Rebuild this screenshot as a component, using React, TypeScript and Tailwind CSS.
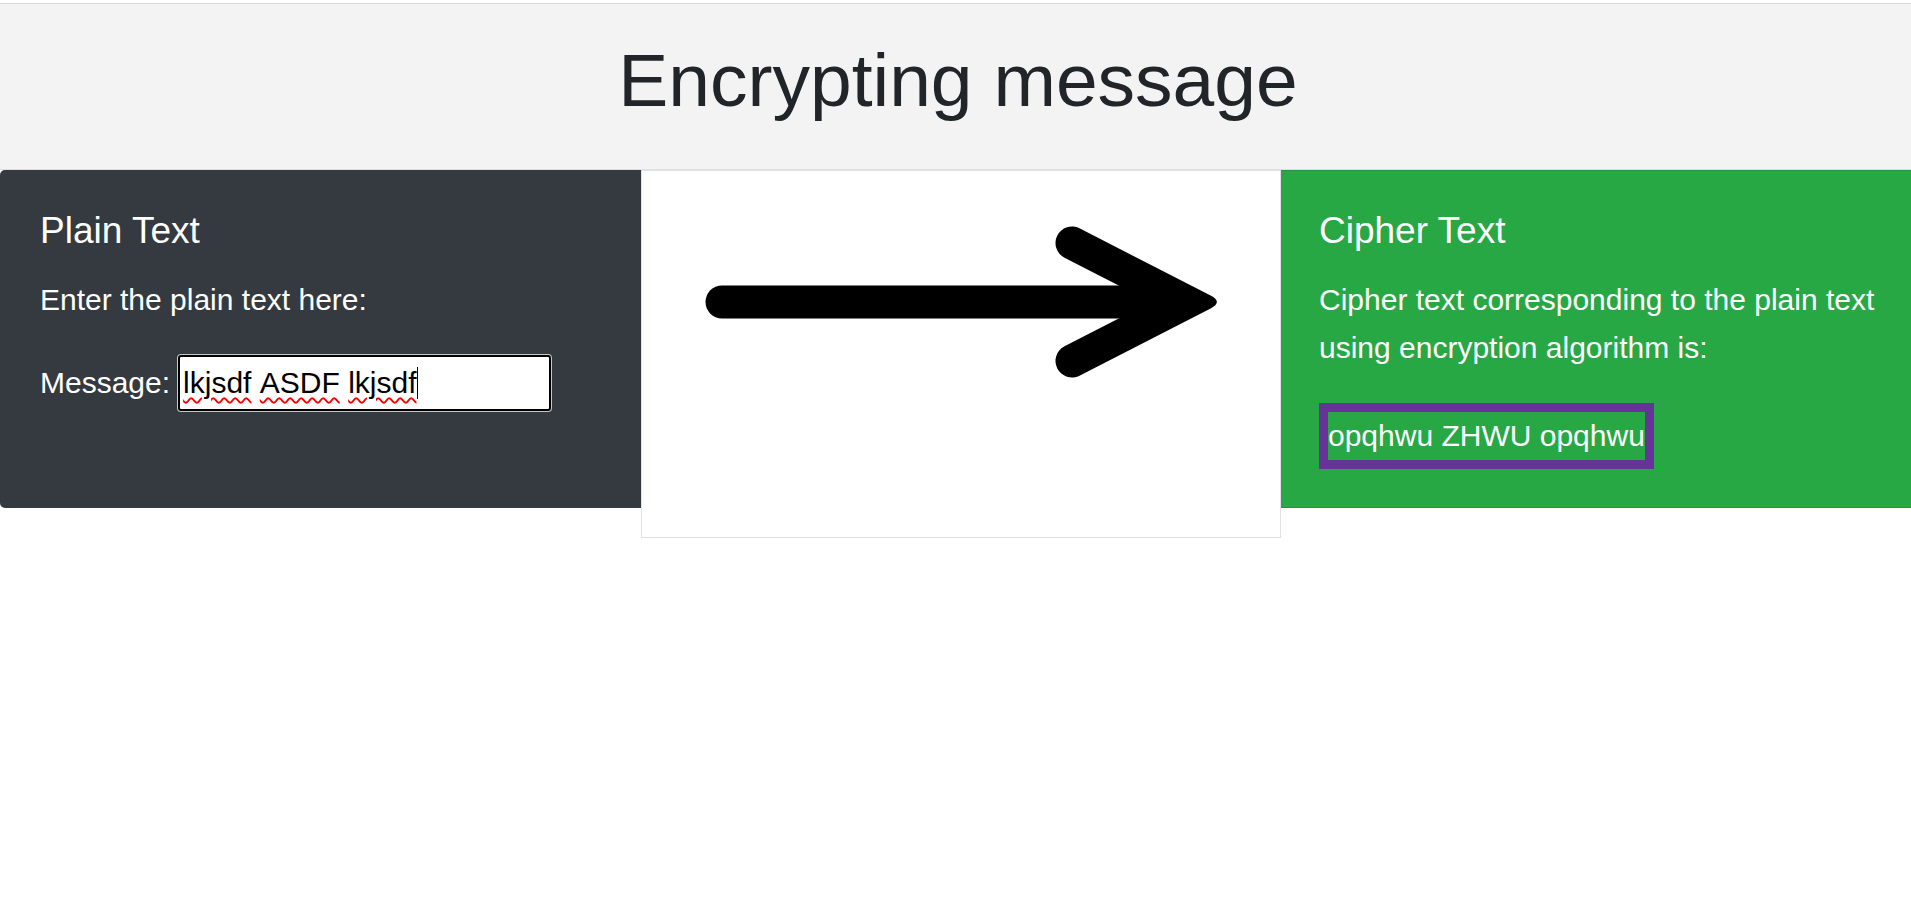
export default function App() {
  return (
    <div className="min-h-screen bg-white font-['Liberation_Sans',Arial,sans-serif]">
      {/* top edge */}
      <div className="h-[3px] bg-white"></div>
      <div className="h-px bg-[#d9d9d9]"></div>

      {/* Header */}
      <header className="h-[166px] bg-[#f3f3f3] border-b border-[#dedede] text-center pt-[31px] pl-[5px]">
        <h1 className="text-[75px] leading-[91px] font-normal text-[#212529]">
          Encrypting message
        </h1>
      </header>

      <div className="grid grid-cols-[641px_640px_1fr] items-start">
        {/* Plain text card */}
        <div className="h-[338px] bg-[#343a40] rounded-l-[5px] pt-[39px] pl-[40px] text-white">
          <h3 className="text-[37px] leading-[44px] mb-[23px]">Plain Text</h3>
          <p className="text-[30px] leading-[48px] mb-[31px]">
            Enter the plain text here:
          </p>
          <div className="flex items-center h-[56px] text-[30px] leading-[48px]">
            <label className="mr-[8px]">Message:</label>
            <div className="w-[373px] h-[56px] bg-white border-2 border-black rounded-[3px] shadow-[0_0_0_1px_#c8c8c8] flex items-center pl-[3px] text-black leading-[40px]">
              <span className="underline decoration-wavy decoration-[#ff0000] decoration-2 underline-offset-[4px]">
                lkjsdf
              </span>
              <span>&nbsp;</span>
              <span className="underline decoration-wavy decoration-[#ff0000] decoration-2 underline-offset-[4px]">
                ASDF
              </span>
              <span>&nbsp;</span>
              <span className="underline decoration-wavy decoration-[#ff0000] decoration-2 underline-offset-[4px]">
                lkjsdf
              </span>
              <span className="inline-block w-px h-[32px] bg-black"></span>
            </div>
          </div>
        </div>

        {/* Arrow */}
        <div className="h-[368px] bg-white border border-[#dee2e6]">
          <svg width="638" height="366" viewBox="0 0 638 366">
            <line
              x1="80"
              y1="131"
              x2="510"
              y2="131"
              stroke="black"
              strokeWidth="33"
              strokeLinecap="round"
            />
            {/* arrow head: two thick barbs, round ends, softened tip */}
            <path
              d="M422.5 86.7 A16.5 16.5 0 0 1 437.5 57.3 L568.6 124.6 Q581.1 131 568.6 137.4 L437.5 204.7 A16.5 16.5 0 0 1 422.5 175.3 L508.9 131 Z"
              fill="black"
            />
          </svg>
        </div>

        {/* Cipher text card */}
        <div className="h-[338px] bg-[#28a745] border-y border-[#23963d] pt-[38px] pl-[38px] pr-[20px] text-white">
          <h3 className="text-[37px] leading-[44px] mb-[23px]">Cipher Text</h3>
          <p className="text-[30px] leading-[48px] mb-[31px]">
            Cipher text corresponding to the plain text using encryption
            algorithm is:
          </p>
          <span className="inline-block border-[9px] border-[#663399] text-[30px] leading-[48px]">
            opqhwu ZHWU opqhwu
          </span>
        </div>
      </div>
    </div>
  );
}
